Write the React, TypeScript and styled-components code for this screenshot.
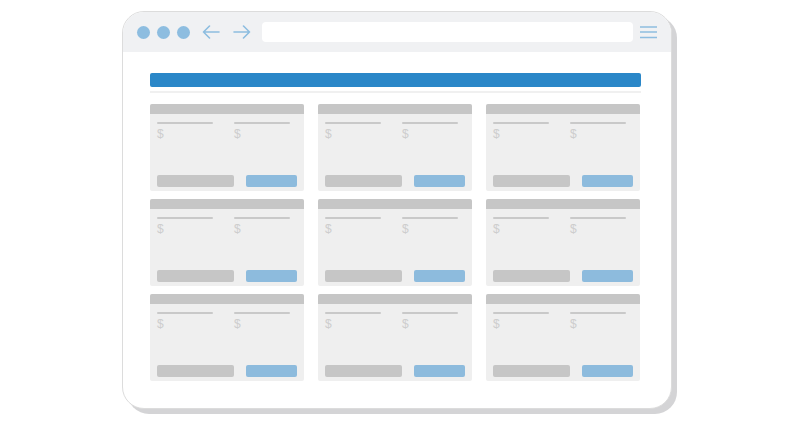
import styled, { createGlobalStyle } from "styled-components";

const GlobalStyle = createGlobalStyle`
  html, body {
    margin: 0;
    padding: 0;
    background: #ffffff;
    font-family: "Liberation Sans", Arial, sans-serif;
  }
`;

const Page = styled.div`
  width: 800px;
  height: 424px;
  padding: 11px 0 0 122px;
  box-sizing: border-box;
`;

const Window = styled.div`
  width: 550px;
  height: 398px;
  box-sizing: border-box;
  border: 1px solid #dcdcdc;
  border-radius: 22px;
  background: #ffffff;
  box-shadow: 5px 5px 0 #d4d4d6;
  overflow: hidden;
  display: flex;
  flex-direction: column;
`;

const Toolbar = styled.div`
  height: 40px;
  background: #f0f1f3;
  display: flex;
  align-items: center;
  padding: 0 14px 0 14px;
  box-sizing: border-box;
`;

const Dot = styled.span`
  width: 13px;
  height: 13px;
  border-radius: 50%;
  background: #8dbde0;
  margin-right: 7px;
  flex: none;
`;

const NavIcon = styled.svg`
  flex: none;
  margin-left: ${(p: { $ml: number }) => p.$ml}px;
`;

const Address = styled.div`
  flex: 1;
  height: 20px;
  margin: 0 7px 0 11px;
  background: #ffffff;
  border-radius: 4px;
`;

const Content = styled.div`
  padding: 21px 30px 0 27px;
`;

const Banner = styled.div`
  height: 14px;
  border-radius: 2px;
  background: #2a87c8;
`;

const Divider = styled.div`
  height: 2px;
  margin-top: 4px;
  background: #f0f0f0;
`;

const Grid = styled.div`
  margin-top: 11px;
  display: grid;
  grid-template-columns: repeat(3, 154px);
  column-gap: 14px;
  row-gap: 8px;
`;

const Card = styled.div`
  height: 87px;
  background: #efefef;
  border-radius: 2px;
  overflow: hidden;
  display: flex;
  flex-direction: column;
`;

const CardHead = styled.div`
  height: 10px;
  background: #c6c6c6;
`;

const CardBody = styled.div`
  flex: 1;
  padding: 8px 7px 4px 7px;
  display: flex;
  flex-direction: column;
`;

const Columns = styled.div`
  display: grid;
  grid-template-columns: 56px 56px;
  column-gap: 21px;
`;

const Price = styled.div`
  display: flex;
  flex-direction: column;
`;

const Rule = styled.div`
  height: 2px;
  background: #c9c9c9;
  border-radius: 1px;
`;

const Dollar = styled.span`
  margin-top: 4px;
  font-size: 12px;
  line-height: 12px;
  color: #cdcdcd;
`;

const Actions = styled.div`
  margin-top: auto;
  display: flex;
  justify-content: space-between;
`;

const Pill = styled.div<{ $blue?: boolean }>`
  height: 12px;
  width: ${(p) => (p.$blue ? 51 : 77)}px;
  border-radius: 2px;
  background: ${(p) => (p.$blue ? "#8dbbdd" : "#c6c6c6")};
`;

const Arrow = ({ dir, ml }: { dir: "left" | "right"; ml: number }) => (
  <NavIcon $ml={ml} width="18" height="14" viewBox="0 0 18 14" fill="none">
    {dir === "left" ? (
      <path d="M17 7H1.5M7.5 1L1.5 7l6 6" stroke="#8dbde0" strokeWidth="1.6" strokeLinecap="round" strokeLinejoin="round" />
    ) : (
      <path d="M1 7h15.5M10.5 1l6 6-6 6" stroke="#8dbde0" strokeWidth="1.6" strokeLinecap="round" strokeLinejoin="round" />
    )}
  </NavIcon>
);

const Menu = () => (
  <svg width="17" height="14" viewBox="0 0 17 14" fill="none">
    <path d="M0 2h17M0 7h17M0 12.5h17" stroke="#8dbde0" strokeWidth="1.6" />
  </svg>
);

const cards = Array.from({ length: 9 }, (_, i) => i);

export default function App() {
  return (
    <>
      <GlobalStyle />
      <Page>
        <Window>
          <Toolbar>
            <Dot />
            <Dot />
            <Dot />
            <Arrow dir="left" ml={5} />
            <Arrow dir="right" ml={13} />
            <Address />
            <Menu />
          </Toolbar>
          <Content>
            <Banner />
            <Divider />
            <Grid>
              {cards.map((i) => (
                <Card key={i}>
                  <CardHead />
                  <CardBody>
                    <Columns>
                      <Price>
                        <Rule />
                        <Dollar>$</Dollar>
                      </Price>
                      <Price>
                        <Rule />
                        <Dollar>$</Dollar>
                      </Price>
                    </Columns>
                    <Actions>
                      <Pill />
                      <Pill $blue />
                    </Actions>
                  </CardBody>
                </Card>
              ))}
            </Grid>
          </Content>
        </Window>
      </Page>
    </>
  );
}
